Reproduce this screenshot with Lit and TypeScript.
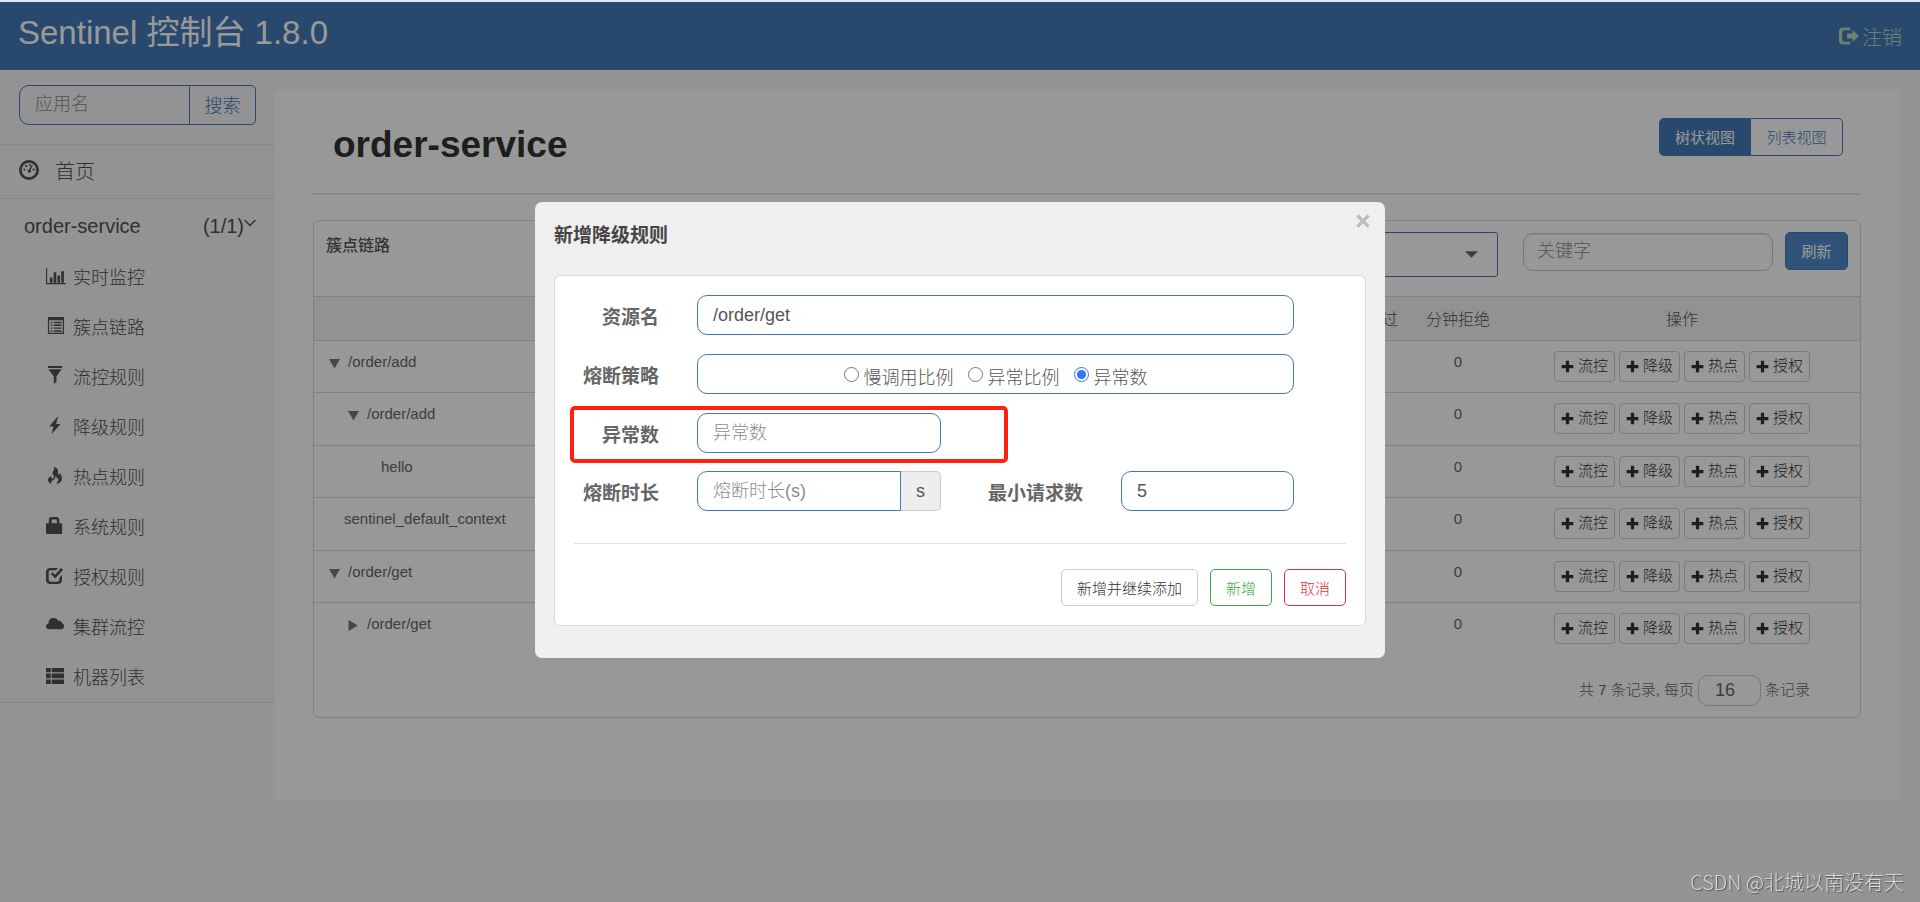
import { LitElement, html, css, svg } from "lit";
import { customElement, state } from "lit/decorators.js";

const base = css`
  *, *::before, *::after { box-sizing: border-box; }
  button, input, select { font: inherit; color: inherit; margin: 0; }
  button { cursor: pointer; }
  svg { display: block; fill: currentColor; flex: none; }
  a { color: inherit; text-decoration: none; }
`;

/* Icon shapes on a 20 x 20 grid. */
const icons: Record<string, unknown> = {
  dashboard: svg`<path fill-rule="evenodd" d="M10 0a10 10 0 1 1 0 20a10 10 0 0 1 0-20zM10 2.7a7.3 7.3 0 1 0 0 14.6a7.3 7.3 0 0 0 0-14.6z"/><circle cx="5.4" cy="9.6" r="1.1"/><circle cx="7.2" cy="6.2" r="1.1"/><circle cx="10.6" cy="5" r="1"/><circle cx="14.7" cy="9.6" r="1.1"/><path d="M12.6 4.8l1.2.5-2.2 4.6a1.7 1.7 0 1 1-1.5-.5z"/>`,
  stats: svg`<path d="M0 2h1.200v17H0zM0 18h21v1.200H0zM4 12h2.800v5.500H4zM8 6.500h2.800v11H8zM12 10h2.800v7.500H12zM16 5.500h2.800v12H16z"/>`,
  list: svg`<path fill-rule="evenodd" d="M2 1h17v18H2zM3.300 4.500v13.200h14.400V4.500z"/><path d="M5 6h1.600v1.500H5zM5 9h1.600v1.500H5zM5 12h1.600v1.500H5zM5 15h1.600v1.500H5zM8 6h8.500v1.500H8zM8 9h8.500v1.500H8zM8 12h8.500v1.500H8zM8 15h8.500v1.500H8z"/>`,
  filter: svg`<path d="M2 0h15v2.200H2zM2.600 3.500h13.800L11 11v5.500L8.200 19v-8z"/>`,
  flash: svg`<path d="M11.700 1L3.500 11h4.300L6 19l9.300-10.500H10.700L12.500 1z"/>`,
  fire: svg`<path d="M8.700 0.500c.5 2.400-.6 3.900-1.300 5.400-.9 1.900-.3 3 .5 4.200.8 1.500.3 3-.8 3.200-1.200.1-1.700-1.300-1.500-2.800C2.800 11.600 1.600 13.600 2.300 15.800c.5 1.500 1.700 2.500 3.400 3.200-.8-1.800 0-3 1.200-3.800 2.200-1.400 3.900-2.700 2.700-5.300 1.500 1 1.900 2.400 1.500 3.900.9-.4 1.300-1.200 1.200-2.200 1.400 2.200.7 4.600-1.600 7.400 3.700-.7 5.800-2.700 6.100-5.300.3-2.800-1.300-4.500-2.300-6.700-.4 1-.4 1.900-.9 2.700-1.200-.9-.9-2.600-.9-4.300C12.700 3.200 11 1.600 8.700.5z"/>`,
  lock: svg`<path fill-rule="evenodd" d="M1 7.500h2V4.200Q3 1 6.200 1h5Q14 1 14 4.200v3.300h2q1 0 1 1V18q0 1-1 1H1q-1 0-1-1V8.500q0-1 1-1zM6 7.500h5.500V5q0-1.200-1-1.200H7Q6 3.800 6 5z"/>`,
  check: svg`<path d="M5 2h7.500L10.800 4.500H5Q2.800 4.500 2.800 6.700v7.600Q2.800 16.500 5 16.500h7q2.200 0 2.200-2.200V12l2.600-2.600V14.500Q16.800 19 12.300 19H4.700Q0 19 0 14.500v-8Q0 2 5 2z"/><path d="M5 8.200l1.800-1.700 2.700 2.600L15.800 2l2.200 2-8.400 9.200z"/>`,
  cloud: svg`<path d="M3.600 14Q0 14 0 10.800 0 8.400 2.600 7.800 2.500 2 8 2q3.600 0 5 3.200.6-.3 1.300-.3 2.300.1 2.500 2.500 2.200.8 2.200 3.200 0 3.400-3.600 3.400z"/>`,
  thlist: svg`<path d="M0 2h5v4.600H0zM6 2h13v4.600H6zM0 8h5v5H0zM6 8h13v5H6zM0 14.300h5V19H0zM6 14.300h13V19H6z"/>`,
  logout: svg`<path d="M11.500 1.500v2.800H5.200Q3.200 4.300 3.200 6.300v7.400q0 2 2 2h6.300v2.800H4.500Q0 18.500 0 14V6Q0 1.500 4.500 1.500z"/><path d="M8 7.500h5.500V4l6.500 6-6.500 6v-3.500H8z"/>`,
  plus: svg`<path d="M7.500 1h5v6.500H19v5h-6.500V19h-5v-6.500H1v-5h6.500z"/>`,
  chevron: svg`<path fill="none" stroke="currentColor" stroke-width="2.400" d="M1 5l9 9 9-9"/>`,
  down: svg`<path d="M0 2h20L10 19z"/>`,
  right: svg`<path d="M1 0v20L18 10z"/>`,
  close: svg`<path fill="none" stroke="currentColor" stroke-width="4.500" d="M2 2l16 16M18 2L2 18"/>`,
  caret: svg`<path d="M0 5h20L10 15z"/>`,
};

const icon = (name: string, size: number) =>
  html`<svg width=${size} height=${size} viewBox="0 0 20 20" overflow="visible" aria-hidden="true">${icons[name]}</svg>`;

@customElement("app-topbar")
class AppTopbar extends LitElement {
  static styles = [base, css`
    :host { display: flex; justify-content: space-between; height: 68px; padding: 0 18px; background: #437ab6; color: #fff; }
    .brand { margin: 0; padding-top: 7px; font-size: 33px; line-height: 48px; font-weight: 400; }
    .logout { display: flex; align-items: center; gap: 3px; font-size: 20px; color: #b4dbc0; }
  `];
  render() {
    return html`<h1 class="brand">Sentinel 控制台 1.8.0</h1>
      <a class="logout" href="#logout">${icon("logout", 20)}<span>注销</span></a>`;
  }
}

@customElement("app-sidebar")
class AppSidebar extends LitElement {
  static styles = [base, css`
    :host { display: block; color: #505050; font-size: 18px; }
    .search { display: flex; height: 74px; padding: 15px 19px 19px; }
    .term { flex: 1; min-width: 0; height: 40px; padding: 0 15px 2px; border: 1px solid #437ab6; border-radius: 10px 0 0 10px; background: transparent; outline: 0; }
    .term::placeholder { color: #8c8c8c; opacity: 1; }
    .go { width: 67px; margin-left: -1px; padding: 0 0 3px; border: 1px solid #437ab6; border-radius: 0 5px 5px 0; background: transparent; color: #437ab6; }
    .home, .group { display: flex; align-items: center; height: 54px; padding: 0 19px; font-size: 20px; border-top: 1px solid #e3e3e3; }
    .home { gap: 16px; padding-bottom: 2px; }
    .home svg { margin-bottom: 2px; }
    .group { justify-content: space-between; padding-left: 24px; padding-top: 2px; }
    .count { display: flex; align-items: center; }
    .count svg { margin-bottom: 8px; }
    .menu { margin: 0; padding: 0; list-style: none; border-bottom: 1px solid #e3e3e3; }
    .item { display: flex; align-items: center; gap: 8px; height: 50px; padding: 0 0 3px 46px; }
  `];
  private items = [
    ["stats", "实时监控"], ["list", "簇点链路"], ["filter", "流控规则"], ["flash", "降级规则"], ["fire", "热点规则"],
    ["lock", "系统规则"], ["check", "授权规则"], ["cloud", "集群流控"], ["thlist", "机器列表"],
  ];
  render() {
    return html`
      <form class="search" @submit=${(e: Event) => e.preventDefault()}>
        <input class="term" type="text" placeholder="应用名" aria-label="应用名" />
        <button class="go">搜索</button>
      </form>
      <nav>
        <a class="home" href="#home">${icon("dashboard", 20)}<span>首页</span></a>
        <a class="group" href="#app"><span>order-service</span><span class="count">(1/1)${icon("chevron", 12)}</span></a>
        <ul class="menu">
          ${this.items.map(([i, t]) => html`<li><a class="item" href="#${i}">${icon(i, 19)}<span>${t}</span></a></li>`)}
        </ul>
      </nav>`;
  }
}

interface Row { name: string; depth: number; mark?: string; }

@customElement("resource-panel")
class ResourcePanel extends LitElement {
  static styles = [base, css`
    :host { display: block; border: 1px solid #d8d8d8; border-radius: 6px; color: #666; font-size: 15px; }
    .bar { display: flex; align-items: flex-start; height: 75px; padding: 11px 12px; }
    .caption { flex: 1; font-size: 16px; line-height: 28px; color: #555; font-weight: 500; margin: 0; }
    .machine { position: relative; width: 300px; margin-right: 25px; }
    .machine select { width: 100%; height: 45px; border: 1px solid #437ab6; border-radius: 3px; background: transparent; appearance: none; }
    .machine svg { position: absolute; right: 20px; top: 16px; pointer-events: none; }
    .key { width: 250px; height: 38px; margin: 1px 12px 0 0; padding: 0 13px 1px; border: 1px solid #c8c8c8; border-radius: 10px; background: transparent; font-size: 18px; box-shadow: inset 0 1px 1px rgba(0, 0, 0, 0.08); }
    .key::placeholder { color: #8c8c8c; opacity: 1; }
    .refresh { width: 63px; height: 38px; padding: 0 0 2px; border: 1px solid #437ab6; border-radius: 5px; background: #4f8ac9; color: #fff; font-weight: 400; }
    table { width: 100%; border-collapse: collapse; table-layout: fixed; }
    th { height: 44px; padding: 0 0 2px; font-size: 16px; font-weight: 300; color: #555; background: #f1f4f7; border-top: 1px solid #d8d8d8; border-bottom: 1px solid #d8d8d8; }
    td { height: 52px; padding: 10px 0 0; line-height: 22px; vertical-align: top; text-align: center; border-bottom: 1px solid #d8d8d8; }
    tr:nth-child(even) td { height: 53px; }
    tr:last-child td { border-bottom: 0; }
    .stat { width: 92px; }
    .ops { width: 356px; }
    .node { display: flex; align-items: center; gap: 8px; padding-left: 15px; }
    .node svg { margin-top: 2px; color: #777; }
    .node.d1 { padding-left: 34px; }
    .node.leaf { padding-left: 30px; }
    .node.d2 { padding-left: 67px; }
    .buttons { display: flex; justify-content: center; gap: 4px; }
    .op { display: flex; align-items: center; justify-content: center; gap: 4px; width: 61px; height: 31px; padding: 0 0 1px; border: 1px solid #ccc; border-radius: 4px; background: transparent; color: #333; }
    .foot { display: flex; align-items: center; justify-content: flex-end; gap: 4px; padding: 19px 50px 11px 0; }
    .foot span, .foot label { padding-bottom: 4px; }
    .size { width: 63px; height: 31px; padding: 0 16px; border: 1px solid #c8c8c8; border-radius: 10px; background: transparent; font-size: 18px; }
  `];
  private rows: Row[] = [
    { name: "/order/add", depth: 0, mark: "down" },
    { name: "/order/add", depth: 1, mark: "down" },
    { name: "hello", depth: 2 },
    { name: "sentinel_default_context", depth: 0 },
    { name: "/order/get", depth: 0, mark: "down" },
    { name: "/order/get", depth: 1, mark: "right" },
  ];
  private ops = ["流控", "降级", "热点", "授权"];
  render() {
    return html`
      <div class="bar">
        <h2 class="caption">簇点链路</h2>
        <div class="machine"><select aria-label="机器"><option></option></select>${icon("caret", 13)}</div>
        <input class="key" type="text" placeholder="关键字" aria-label="关键字" />
        <button class="refresh">刷新</button>
      </div>
      <table>
        <thead><tr><th></th><th class="stat">分钟通过</th><th class="stat">分钟拒绝</th><th class="ops">操作</th></tr></thead>
        <tbody>
          ${this.rows.map((r) => html`<tr>
            <td><div class="node d${r.depth} ${!r.mark && !r.depth ? "leaf" : ""}">${r.mark ? icon(r.mark, 11) : ""}<span>${r.name}</span></div></td>
            <td></td><td>0</td>
            <td><div class="buttons">${this.ops.map((o) => html`<button class="op">${icon("plus", 13)}<span>${o}</span></button>`)}</div></td>
          </tr>`)}
        </tbody>
      </table>
      <div class="foot"><label for="size">共 7 条记录, 每页</label><input class="size" id="size" type="text" value="16" /><span>条记录</span></div>`;
  }
}

@customElement("degrade-dialog")
class DegradeDialog extends LitElement {
  static styles = [base, css`
    :host { display: block; position: relative; width: 850px; max-width: 100%; padding: 0 19px 32px; border-radius: 7px; background: #efefef; color: #555; font-size: 18px; }
    .title { margin: 0; height: 73px; padding-top: 20px; font-size: 19px; line-height: 28px; font-weight: 700; color: #444; }
    .close { position: absolute; top: 12px; right: 15px; padding: 0; border: 0; background: none; color: #bcbcbc; }
    .card { padding: 19px; border: 1px solid #d8d8d8; border-radius: 6px; background: #fff; }
    .row { position: relative; display: grid; grid-template-columns: 85px 244px 143px minmax(0, 1fr); grid-template-rows: 40px; column-gap: 38px; margin: 0 52px 19px 0; }
    .row.tight { margin-bottom: 18px; }
    .row.pair { grid-template-columns: 85px 244px 104px minmax(0, 1fr); }
    .label { padding-top: 4px; font-size: 19px; line-height: 38px; font-weight: 700; color: #666; text-align: right; white-space: nowrap; }
    .field { width: 100%; height: 40px; padding: 0 15px; border: 1px solid #437ab6; border-radius: 10px; background: #fff; outline: 0; }
    .field::placeholder { color: #8c8c8c; opacity: 1; }
    .wide { grid-column: 2 / -1; }
    .radios { display: flex; align-items: center; justify-content: center; gap: 14px; padding: 4px 0 0; margin: 0; }
    .radio { display: flex; align-items: center; gap: 5px; }
    .radio input { width: 15px; height: 15px; margin-bottom: 4px; accent-color: #2f76ff; }
    .group { display: flex; }
    .group .field { flex: 1; min-width: 0; border-radius: 10px 0 0 10px; }
    .unit { width: 40px; border: 1px solid #ccc; border-left: 0; border-radius: 0 5px 5px 0; background: #eee; line-height: 38px; text-align: center; }
    .mark { position: absolute; left: -4px; top: -7px; width: 438px; height: 57px; border: 4px solid #ff2012; border-radius: 5px; pointer-events: none; }
    .actions { display: flex; justify-content: flex-end; gap: 12px; margin-top: 32px; padding-top: 25px; border-top: 1px solid #e3e3e3; }
    .btn { height: 37px; padding: 0 15px 1px; border: 1px solid #ccc; border-radius: 5px; background: #fff; font-size: 15px; color: #333; }
    .ok { border-color: #3fa83f; color: #3fa83f; }
    .cancel { border-color: #d43545; color: #d43545; }
  `];
  @state() private strategy = "异常数";
  private strategies = ["慢调用比例", "异常比例", "异常数"];
  render() {
    return html`
      <h2 class="title">新增降级规则</h2>
      <button class="close" aria-label="关闭">${icon("close", 14)}</button>
      <form class="card" @submit=${(e: Event) => e.preventDefault()}>
        <div class="row"><label class="label" for="res">资源名</label><input class="field wide" id="res" type="text" value="/order/get" /></div>
        <div class="row"><span class="label" id="strategy">熔断策略</span>
          <div class="field wide radios" role="radiogroup" aria-labelledby="strategy">
            ${this.strategies.map((s) => html`<label class="radio"><input type="radio" name="strategy" .checked=${s === this.strategy} @change=${() => (this.strategy = s)} />${s}</label>`)}
          </div>
        </div>
        <div class="row tight"><label class="label" for="count">异常数</label><input class="field" id="count" type="text" placeholder="异常数" /><div class="mark"></div></div>
        <div class="row pair"><label class="label" for="win">熔断时长</label>
          <div class="group"><input class="field" id="win" type="text" placeholder="熔断时长(s)" /><span class="unit">s</span></div>
          <label class="label" for="min">最小请求数</label><input class="field" id="min" type="text" value="5" />
        </div>
        <div class="actions">
          <button class="btn" type="button">新增并继续添加</button>
          <button class="btn ok">新增</button>
          <button class="btn cancel" type="button">取消</button>
        </div>
      </form>`;
  }
}

@customElement("app-root")
class AppRoot extends LitElement {
  static styles = [base, css`
    :host { display: flex; flex-direction: column; min-height: 100vh; border-top: 2px solid #dfe8ef; background: #f7f7f7; font-family: "Liberation Sans", "Noto Sans CJK SC", sans-serif; font-weight: 300; box-sizing: border-box; }
    .body { display: grid; grid-template-columns: 275px minmax(0, 1fr); align-items: start; }
    app-sidebar { background: #f5f5f5; }
    .page { margin: 21px 21px 0 0; padding: 0 38px 83px; background: #fefefe; }
    .head { display: flex; justify-content: space-between; align-items: flex-start; height: 104px; padding: 27px 18px 0 20px; border-bottom: 2px solid #e3e3e3; margin-bottom: 25px; }
    .name { margin: 0; padding-top: 4px; font-size: 37px; line-height: 46px; font-weight: 700; color: #333; }
    .views { display: flex; }
    .view { width: 92px; height: 38px; padding: 0 0 2px; border: 1px solid #437ab6; font-size: 15px; background: transparent; color: #437ab6; }
    .view.on { border-radius: 5px 0 0 5px; background: #437ab6; color: #fff; font-weight: 400; }
    .view:last-child { border-left: 0; border-radius: 0 5px 5px 0; }
    .shade { position: fixed; inset: 2px 0 0; display: flex; justify-content: center; align-items: flex-start; padding-top: 200px; background: rgba(0, 0, 0, 0.4); }
    .credit { position: fixed; right: 16px; bottom: 6px; font-family: "Noto Sans CJK SC", sans-serif; font-size: 20px; line-height: 28px; color: #d8d8d8; text-shadow: 1px 1px 1px #555; }
  `];
  render() {
    return html`
      <app-topbar></app-topbar>
      <div class="body">
        <app-sidebar></app-sidebar>
        <main class="page">
          <div class="head">
            <h1 class="name">order-service</h1>
            <div class="views"><button class="view on">树状视图</button><button class="view">列表视图</button></div>
          </div>
          <resource-panel></resource-panel>
        </main>
      </div>
      <div class="shade"><degrade-dialog role="dialog" aria-label="新增降级规则"></degrade-dialog></div>
      <div class="credit">CSDN @北城以南没有天</div>`;
  }
}
